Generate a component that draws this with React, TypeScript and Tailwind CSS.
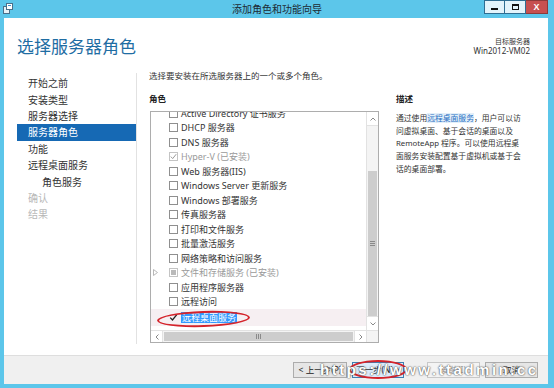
import React from "react";

const F = "font-['Noto_Sans','Noto_Sans_CJK_SC',sans-serif]";

type Role = {
  t: string;
  state?: "none" | "checkedDisabled" | "partial" | "checked";
  expand?: boolean;
  selected?: boolean;
  gray?: boolean;
};

const roles: Role[] = [
  { t: "Active Directory 证书服务" },
  { t: "DHCP 服务器" },
  { t: "DNS 服务器" },
  { t: "Hyper-V (已安装)", state: "checkedDisabled", gray: true },
  { t: "Web 服务器(IIS)" },
  { t: "Windows Server 更新服务" },
  { t: "Windows 部署服务" },
  { t: "传真服务器" },
  { t: "打印和文件服务" },
  { t: "批量激活服务" },
  { t: "网络策略和访问服务" },
  { t: "文件和存储服务 (已安装)", state: "partial", expand: true, gray: true },
  { t: "应用程序服务器" },
  { t: "远程访问" },
  { t: "远程桌面服务", state: "checked", selected: true },
];

const nav = [
  { t: "开始之前" },
  { t: "安装类型" },
  { t: "服务器选择" },
  { t: "服务器角色", sel: true },
  { t: "功能" },
  { t: "远程桌面服务" },
  { t: "角色服务", indent: true },
  { t: "确认", dis: true },
  { t: "结果", dis: true },
];

function Check({ state }: { state?: Role["state"] }) {
  if (state === "checked") {
    return (
      <div className="w-[9px] h-[9px] flex items-center justify-center">
        <svg width="9" height="9" viewBox="0 0 9 9">
          <path d="M1.2 4.6 L3.5 7 L7.8 1.6" fill="none" stroke="#222" strokeWidth="1.3" />
        </svg>
      </div>
    );
  }
  if (state === "checkedDisabled") {
    return (
      <div className="w-[9px] h-[9px] border border-[#c4c4c4] bg-white flex items-center justify-center">
        <svg width="7" height="7" viewBox="0 0 7 7">
          <path d="M0.8 3.6 L2.7 5.6 L6.2 1.2" fill="none" stroke="#9a9a9a" strokeWidth="1" />
        </svg>
      </div>
    );
  }
  if (state === "partial") {
    return (
      <div className="w-[9px] h-[9px] border border-[#c4c4c4] bg-white flex items-center justify-center">
        <div className="w-[5px] h-[5px] bg-[#b9b9b9]" />
      </div>
    );
  }
  return <div className="w-[9px] h-[9px] border border-[#8f8f8f] bg-white" />;
}

function Btn({ children, w, def, dis }: { children: React.ReactNode; w: string; def?: boolean; dis?: boolean }) {
  return (
    <div
      className={
        "h-[16px] flex items-center justify-center text-[8.5px] leading-none border " +
        w +
        " " +
        (def
          ? "border-[#3c7fb1] bg-[#dcecfc] text-[#222]"
          : dis
          ? "border-[#c8c8c8] bg-[#f4f4f4] text-[#9a9a9a]"
          : "border-[#acacac] bg-[#e6e6e6] text-[#222]")
      }
    >
      {children}
    </div>
  );
}

export default function App() {
  return (
    <div className={"w-[554px] h-[388px] bg-[#5cc6ea] flex flex-col overflow-hidden " + F}>
      {/* Title bar */}
      <div className="h-[18px] relative flex items-center justify-center shrink-0">
        <div className="absolute left-[3px] top-[3px] w-[10px] h-[11px]">
          <svg width="10" height="11" viewBox="0 0 10 11">
            <rect x="0.5" y="3.5" width="6" height="7" fill="#e8f2f8" stroke="#4a6f8a" />
            <rect x="3.5" y="0.5" width="6" height="6" fill="#ffffff" stroke="#4a6f8a" />
            <rect x="5" y="2" width="3" height="1" fill="#3a8fd0" />
          </svg>
        </div>
        <span className="text-[10px] leading-none text-[#1d2a33]">添加角色和功能向导</span>
        <div className="absolute right-[6px] top-0 flex">
          <div className="w-[21px] h-[14px] bg-[#e3f4fb] border border-[#2f6e92] flex items-end justify-center pb-[3px]">
            <div className="w-[7px] h-[2px] bg-[#111]" />
          </div>
          <div className="w-[21px] h-[14px] bg-[#e3f4fb] border border-[#2f6e92] border-l-0 flex items-center justify-center">
            <div className="w-[7px] h-[6px] border border-[#111] border-t-2" />
          </div>
          <div className="w-[22px] h-[14px] bg-[#c75050] border border-[#8c3a3a] border-l-0 flex items-center justify-center">
            <span className="text-white text-[9px] font-bold leading-none font-['Liberation_Sans',sans-serif]">X</span>
          </div>
        </div>
      </div>

      {/* Body */}
      <div className="flex-1 ml-[4px] mr-[6px] mb-[4px] bg-white flex flex-col relative">
        {/* Header */}
        <div className="h-[52px] shrink-0 flex justify-between">
          <div className="pl-[13px] pt-[19px] text-[17px] leading-[20px] text-[#1f6da3]">选择服务器角色</div>
          <div className="pr-[18px] pt-[20px] flex flex-col items-end text-[#333]">
            <span className="text-[7px] leading-[8px]">目标服务器</span>
            <span className="text-[8px] leading-[9px]">Win2012-VM02</span>
          </div>
        </div>

        {/* Main */}
        <div className="flex-1 flex">
          <div className="w-[133px] shrink-0 mt-[3px] mb-[11px] border-r border-[#e2e2e2] pl-[13px] pt-[2px]">
            {nav.map((n) => (
              <div
                key={n.t}
                className={
                  "h-[16.4px] flex items-center text-[10px] leading-none " +
                  (n.indent ? "pl-[25px] " : "pl-[11px] ") +
                  (n.sel ? "bg-[#1669b4] text-white" : n.dis ? "text-[#b8b8b8]" : "text-[#333]")
                }
              >
                {n.t}
              </div>
            ))}
          </div>

          <div className="flex-1 pl-[12px] flex flex-col">
            <div className="text-[8.5px] leading-[12px] text-[#333]">选择要安装在所选服务器上的一个或多个角色。</div>
            <div className="flex mt-[11px]">
              <div className="w-[230px] shrink-0 flex flex-col">
                <div className="text-[8.5px] leading-[12px] font-bold text-[#222]">角色</div>
                <div className="ml-[1px] mt-[6px] w-[229px] h-[232px] border border-[#adadad] flex flex-col relative">
                  <div className="flex-1 flex min-h-0">
                    <div className="flex-1 overflow-hidden">
                      <div className="mt-[-6px]">
                        {roles.map((r) => (
                          <div
                            key={r.t}
                            className={
                              "flex items-center relative " +
                              (r.selected ? "h-[17px] bg-[#f6eff2]" : "h-[14.5px]")
                            }
                          >
                            <div className="w-[18px] h-full flex items-center pl-[2px]">
                              {r.expand ? (
                                <svg width="5" height="7" viewBox="0 0 5 7">
                                  <path d="M0.5 0.5 L4.5 3.5 L0.5 6.5 Z" fill="none" stroke="#b0b0b0" strokeWidth="0.9" />
                                </svg>
                              ) : null}
                            </div>
                            <Check state={r.state} />
                            <span
                              className={
                                "ml-[3px] text-[9px] leading-[11px] whitespace-nowrap " +
                                (r.selected
                                  ? "bg-[#3399ff] text-white px-[1px]"
                                  : r.gray
                                  ? "text-[#9a9a9a]"
                                  : "text-[#333]")
                              }
                            >
                              {r.t}
                            </span>
                          </div>
                        ))}
                      </div>
                    </div>
                    {/* vertical scrollbar */}
                    <div className="w-[12px] border-l border-[#e2e2e2] bg-[#f4f4f4] flex flex-col">
                      <div className="h-[14px] bg-white border-b border-[#e2e2e2] flex items-center justify-center">
                        <svg width="6" height="4" viewBox="0 0 6 4">
                          <path d="M0.5 3.5 L3 1 L5.5 3.5" fill="none" stroke="#7a7a7a" strokeWidth="0.9" />
                        </svg>
                      </div>
                      <div className="flex-1 flex flex-col justify-end px-[1px]">
                        <div className="h-[145px] bg-[#cdcdcd] flex items-center justify-center">
                          <div className="flex flex-col gap-[1px]">
                            <div className="w-[5px] h-[1px] bg-[#8a8a8a]" />
                            <div className="w-[5px] h-[1px] bg-[#8a8a8a]" />
                            <div className="w-[5px] h-[1px] bg-[#8a8a8a]" />
                          </div>
                        </div>
                      </div>
                      <div className="h-[14px] bg-white border-t border-[#e2e2e2] flex items-center justify-center">
                        <svg width="6" height="4" viewBox="0 0 6 4">
                          <path d="M0.5 0.5 L3 3 L5.5 0.5" fill="none" stroke="#7a7a7a" strokeWidth="0.9" />
                        </svg>
                      </div>
                    </div>
                  </div>
                  {/* horizontal scrollbar */}
                  <div className="h-[12px] border-t border-[#e2e2e2] bg-[#f4f4f4] flex">
                    <div className="w-[12px] bg-white border-r border-[#e2e2e2] flex items-center justify-center">
                      <svg width="4" height="6" viewBox="0 0 4 6">
                        <path d="M3.5 0.5 L1 3 L3.5 5.5" fill="none" stroke="#7a7a7a" strokeWidth="0.9" />
                      </svg>
                    </div>
                    <div className="flex-1 py-[1px] px-[1px]">
                      <div className="h-full bg-[#cdcdcd] flex items-center justify-center gap-[1px]">
                        <div className="w-[1px] h-[5px] bg-[#8a8a8a]" />
                        <div className="w-[1px] h-[5px] bg-[#8a8a8a]" />
                        <div className="w-[1px] h-[5px] bg-[#8a8a8a]" />
                      </div>
                    </div>
                    <div className="w-[12px] bg-white border-l border-[#e2e2e2] flex items-center justify-center">
                      <svg width="4" height="6" viewBox="0 0 4 6">
                        <path d="M0.5 0.5 L3 3 L0.5 5.5" fill="none" stroke="#7a7a7a" strokeWidth="0.9" />
                      </svg>
                    </div>
                    <div className="w-[12px] bg-[#f4f4f4] border-l border-[#e2e2e2]" />
                  </div>
                  {/* red ellipse */}
                  <div className="absolute left-[6px] top-[199px] w-[93px] h-[16px] rounded-[50%] border-2 border-[#d4232b] -rotate-2" />
                </div>
              </div>
              <div className="flex-1 pl-[17px] flex flex-col">
                <div className="text-[8.5px] leading-[12px] font-bold text-[#222]">描述</div>
                <div className="mt-[7px] text-[7.8px] leading-[12.7px] text-[#333] whitespace-nowrap">
                  <div>
                    通过使用<span className="text-[#2a6fc4] bg-[#e3eff9]">远程桌面服务</span>，用户可以访
                  </div>
                  <div>问虚拟桌面、基于会话的桌面以及</div>
                  <div>RemoteApp 程序。可以使用远程桌</div>
                  <div>面服务安装配置基于虚拟机或基于会</div>
                  <div>话的桌面部署。</div>
                </div>
              </div>
            </div>
          </div>
        </div>

        {/* Footer */}
        <div className="h-[29px] shrink-0 bg-[#f0f0f0] border-t border-[#dedede] flex items-center justify-end pr-[10px] relative">
          <Btn w="w-[54px]">&lt; 上一步(P)</Btn>
          <div className="w-[5px]" />
          <Btn w="w-[52px]" def>
            下一步(N) &gt;
          </Btn>
          <div className="w-[23px]" />
          <Btn w="w-[53px]" dis>
            安装(I)
          </Btn>
          <div className="w-[5px]" />
          <Btn w="w-[53px]">取消</Btn>
          <div className="absolute left-[345px] top-[4px] w-[58px] h-[19px] rounded-[50%] border-2 border-[#d4232b]" />
          <div className="absolute left-[316px] top-[6px] whitespace-nowrap text-[15px] leading-[16px] font-bold tracking-[2.5px] text-white [text-shadow:0_0_2px_#555,0_0_1px_#555] font-['Liberation_Sans',sans-serif]">
            https://www.ttadmin.cc
          </div>
        </div>
      </div>
    </div>
  );
}
